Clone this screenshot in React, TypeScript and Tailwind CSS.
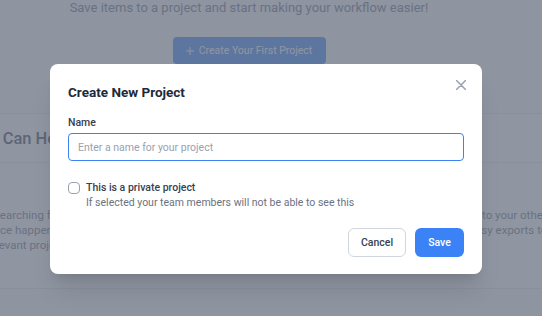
import React from 'react';

export default function App() {
  return (
    <div className="relative h-[316px] w-[542px] overflow-hidden bg-gray-50 font-['Roboto',sans-serif]">
      {/* page behind the dialog */}
      <div className="flex flex-col items-center pr-[44px]">
        <p className="mt-[-2px] text-[13px] leading-[20px] text-gray-500">
          Save items to a project and start making your workflow easier!
        </p>
        <button className="mt-[19px] flex h-[27px] w-[153px] items-center justify-center gap-[5px] rounded bg-[#3b82f6] text-[10.5px] text-white">
          <svg width="8" height="8" viewBox="0 0 8 8" stroke="currentColor" strokeWidth="1">
            <path d="M4 0v8M0 4h8" />
          </svg>
          Create Your First Project
        </button>
      </div>
      <div className="mt-[49px] border-y border-gray-200 bg-white">
        <div className="flex h-[49px] items-center overflow-hidden border-b border-gray-200 pt-[3px]">
          <h2 className="ml-[-62px] whitespace-nowrap text-[16.5px] font-medium text-gray-700">How We Can Help</h2>
        </div>
        <div className="flex h-[125px] justify-between pt-[45px] text-[11.5px] leading-[15px] text-gray-500">
          <div className="whitespace-nowrap">
            <div className="ml-[-7px]">Searching for</div>
            <div className="ml-[-13px]">once happened</div>
            <div className="ml-[-14px]">relevant projects</div>
          </div>
          <div className="w-[60px] whitespace-nowrap">
            <div>to your other</div>
            <div className="ml-[-13px]">easy exports to</div>
          </div>
        </div>
      </div>

      {/* overlay + dialog */}
      <div className="absolute inset-0 bg-gray-500/75">
        <div className="ml-[50px] mt-[64px] w-[432px] rounded-lg bg-white px-[18px] pb-[17px] pt-[19px] shadow-xl">
          <div className="flex items-start justify-between">
            <h3 className="text-[13.5px] font-bold leading-[18px] text-gray-800">Create New Project</h3>
            <button className="mr-[-2px] mt-[-3px] text-gray-400">
              <svg width="10" height="10" viewBox="0 0 10 10" fill="none" stroke="currentColor" strokeWidth="1.5" strokeLinecap="round">
                <path d="M0.5 0.5l9 9M9.5 0.5l-9 9" />
              </svg>
            </button>
          </div>
          <label className="mt-[15px] block text-[10.5px] font-medium leading-[14px] text-gray-700">Name</label>
          <input
            type="text"
            placeholder="Enter a name for your project"
            className="mt-[3px] block h-[28px] w-full rounded border border-[#3b82f6] px-[9px] text-[10.5px] text-gray-900 outline-none placeholder:text-gray-400"
          />
          <div className="mt-[20px] flex items-start gap-[6px]">
            <input type="checkbox" className="mt-[1px] h-[12px] w-[12px] shrink-0 appearance-none rounded-sm border border-gray-400 bg-white" />
            <div>
              <div className="text-[10.5px] font-medium leading-[14px] text-gray-700">This is a private project</div>
              <div className="mt-[1px] text-[10.5px] leading-[14px] text-gray-500">
                If selected your team members will not be able to see this
              </div>
            </div>
          </div>
          <div className="mt-[18px] flex justify-end gap-[9px]">
            <button className="h-[29px] w-[58px] rounded-md border border-gray-300 bg-white text-[10.5px] font-medium text-gray-700">
              Cancel
            </button>
            <button className="h-[29px] w-[49px] rounded-md bg-[#3b82f6] text-[10.5px] font-medium text-white">
              Save
            </button>
          </div>
        </div>
      </div>
    </div>
  );
}
